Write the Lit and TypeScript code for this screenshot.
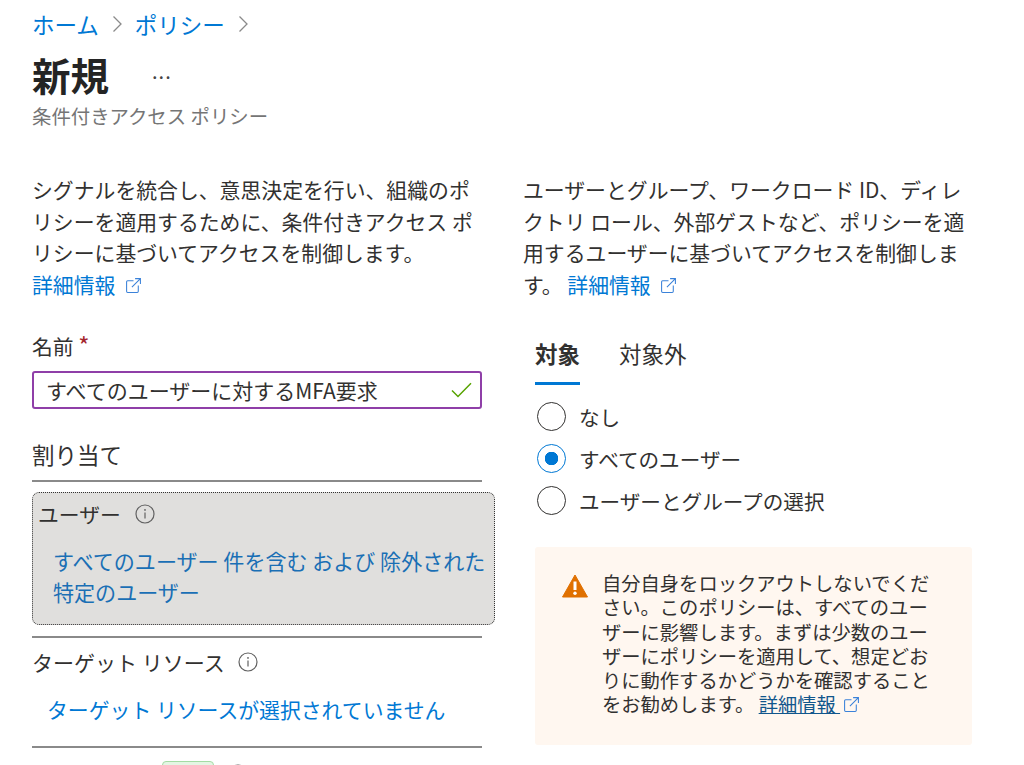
import { LitElement, html, css, svg } from 'lit'
import { customElement } from 'lit/decorators.js'

const externalIcon = html`<svg class="ext" viewBox="0 0 16 16" fill="none" stroke="currentColor" stroke-width="1">
  <path d="M8 3.5H2.5a1 1 0 0 0-1 1v9a1 1 0 0 0 1 1h9a1 1 0 0 0 1-1V8" />
  <path d="M6.5 9.5 14.5 1.5M9.5 1.5h5v5" />
</svg>`

const infoIcon = html`<svg class="info" viewBox="0 0 20 20" fill="none" stroke="#616161">
  <circle cx="10" cy="10" r="9" stroke-width="1.2" />
  <path d="M10 8.6v6" stroke-width="1.2" />
  <circle cx="10" cy="5.9" r=".9" fill="#616161" stroke="none" />
</svg>`

const chevron = svg`<path d="M1.5 1.5 9 9l-7.5 7.5" fill="none" stroke="#8a8a8a" stroke-width="1.3" />`

@customElement('app-root')
export class AppRoot extends LitElement {
  render () {
    return html`
      <div class="page">
        <nav class="crumbs">
          <a>ホーム</a><svg class="chev" viewBox="0 0 11 18">${chevron}</svg>
          <a>ポリシー</a><svg class="chev" viewBox="0 0 11 18">${chevron}</svg>
        </nav>
        <div class="title-row">
          <h1>新規</h1>
          <span class="more">...</span>
        </div>
        <div class="subtitle">条件付きアクセス ポリシー</div>

        <div class="columns">
          <section class="left">
            <p class="desc">シグナルを統合し、意思決定を行い、組織のポリシーを適用するために、条件付きアクセス ポリシーに基づいてアクセスを制御します。<br><a>詳細情報 ${externalIcon}</a></p>

            <label class="field-label">名前 <span class="req">*</span></label>
            <div class="input">
              <span>すべてのユーザーに対するMFA要求</span>
              <svg class="check" viewBox="0 0 21 16" fill="none" stroke="#57a300" stroke-width="1.5"><path d="M1 8.5 7 14.5 20 1.2" /></svg>
            </div>

            <div class="group-title">割り当て</div>
            <div class="rule"></div>

            <div class="selected">
              <div class="row-title">ユーザー ${infoIcon}</div>
              <a class="selected-link">すべてのユーザー 件を含む および 除外された 特定のユーザー</a>
            </div>
            <div class="rule second"></div>

            <div class="row-title plain">ターゲット リソース ${infoIcon}</div>
            <a class="target-link">ターゲット リソースが選択されていません</a>
            <div class="rule third"></div>

            <div class="row-title plain last">ネットワーク <span class="badge">NEW</span> ${infoIcon}</div>
          </section>

          <section class="right">
            <p class="desc">ユーザーとグループ、ワークロード ID、ディレクトリ ロール、外部ゲストなど、ポリシーを適用するユーザーに基づいてアクセスを制御します。 <a>詳細情報 ${externalIcon}</a></p>

            <div class="tabs">
              <div class="tab active">対象</div>
              <div class="tab">対象外</div>
            </div>

            <div class="radios">
              <div class="radio"><span class="dot"></span>なし</div>
              <div class="radio on"><span class="dot"></span>すべてのユーザー</div>
              <div class="radio"><span class="dot"></span>ユーザーとグループの選択</div>
            </div>

            <div class="warning">
              <svg class="warn-icon" viewBox="0 0 26 24">
                <path d="M13 1 25.5 23H.5Z" fill="#e07000" stroke="#e07000" stroke-width="1" stroke-linejoin="round" />
                <path d="M13 7.5v8.5" stroke="#fff" stroke-width="3" />
                <circle cx="13" cy="19.3" r="1.7" fill="#fff" />
              </svg>
              <p>自分自身をロックアウトしないでください。このポリシーは、すべてのユーザーに影響します。まずは少数のユーザーにポリシーを適用して、想定どおりに動作するかどうかを確認することをお勧めします。 <a><u>詳細情報 </u>${externalIcon}</a></p>
            </div>
          </section>
        </div>
      </div>
    `
  }

  static styles = css`
    :host {
      display: block;
      height: 765px;
      overflow: hidden;
      background: #fff;
      color: #323130;
      font-family: "Noto Sans CJK JP", "Liberation Sans", sans-serif;
    }

    a {
      color: #0078d4;
      text-decoration: none;
    }

    p {
      margin: 0;
    }

    .page {
      padding: 7px 0 0 32px;
    }

    .crumbs {
      display: flex;
      align-items: center;
      height: 34px;
      font-size: 22.5px;
      line-height: 34px;
    }

    .chev {
      width: 11px;
      height: 18px;
      margin: 0 12px 0 13px;
    }

    .title-row {
      display: flex;
      align-items: center;
      height: 48px;
      margin-top: 9px;
    }

    h1 {
      margin: 0;
      font-size: 38.5px;
      line-height: 48px;
      font-weight: 700;
      color: #242424;
    }

    .more {
      margin: 0 0 6px 43px;
      font-size: 20px;
      line-height: 20px;
      letter-spacing: 1px;
      color: #444;
    }

    .subtitle {
      margin-top: 4px;
      font-size: 19.4px;
      line-height: 28px;
      color: #757575;
    }

    .columns {
      display: flex;
      margin-top: 44px;
    }

    .left {
      width: 450px;
      flex: none;
    }

    .right {
      width: 450px;
      flex: none;
      margin-left: 41px;
    }

    .desc {
      font-size: 20.85px;
      line-height: 31.5px;
      height: 126px;
    }

    .ext {
      width: 17px;
      height: 17px;
      margin-left: 5px;
      vertical-align: -1px;
      color: #3b82d9;
    }

    .field-label {
      display: block;
      margin-top: 31px;
      font-size: 20.8px;
      line-height: 30px;
    }

    .req {
      color: #a4262c;
      font-size: 24px;
      line-height: 20px;
    }

    .input {
      display: flex;
      align-items: center;
      justify-content: space-between;
      box-sizing: border-box;
      height: 38px;
      margin-top: 10px;
      padding: 0 8px 0 12px;
      border: 2px solid #8f3fa8;
      border-radius: 3px;
      font-size: 21px;
    }

    .check {
      width: 21px;
      height: 16px;
    }

    .group-title {
      margin-top: 29px;
      font-size: 22.5px;
      line-height: 32px;
    }

    .rule {
      height: 2px;
      margin-top: 10px;
      background: #8a8a8a;
    }

    .selected {
      box-sizing: border-box;
      width: 463px;
      height: 133px;
      margin-top: 10px;
      padding: 4px 0 0 5px;
      background: #e0dfdd;
      border: 1.5px dotted #333;
      border-radius: 7px;
    }

    .row-title {
      display: flex;
      align-items: center;
      font-size: 20.8px;
      line-height: 34px;
    }

    .info {
      width: 20px;
      height: 20px;
      margin-left: 14px;
    }

    .selected-link {
      display: block;
      width: 440px;
      margin: 15px 0 0 15px;
      font-size: 21.05px;
      line-height: 31px;
      color: #1a6fb5;
    }

    .second {
      margin-top: 11px;
    }

    .plain {
      margin-top: 7px;
      font-size: 21px;
      line-height: 34px;
    }

    .plain .info {
      margin-left: 13px;
    }

    .target-link {
      display: block;
      margin: 15px 0 0 15px;
      font-size: 20.85px;
      line-height: 31px;
    }

    .third {
      margin-top: 21px;
    }

    .last {
      margin-top: 9px;
    }

    .badge {
      box-sizing: border-box;
      width: 52px;
      height: 26px;
      margin-left: 4px;
      border: 1px solid #a4dca4;
      border-radius: 4px;
      background: #e4f6e4;
      color: #107c10;
      font-size: 14px;
      line-height: 24px;
      text-align: center;
    }

    .plain .badge + .info {
      margin-left: 14px;
    }

    .tabs {
      display: flex;
      gap: 39px;
      margin: 32px 0 0 12px;
    }

    .tab {
      height: 53px;
      font-size: 22.5px;
      line-height: 42px;
      box-sizing: border-box;
    }

    .tab.active {
      font-weight: 700;
      border-bottom: 3px solid #0078d4;
    }

    .radios {
      display: flex;
      flex-direction: column;
      gap: 13px;
      margin: 17px 0 0 14px;
    }

    .radio {
      display: flex;
      align-items: center;
      gap: 13px;
      height: 29px;
      font-size: 20.6px;
    }

    .dot {
      box-sizing: border-box;
      flex: none;
      width: 29px;
      height: 29px;
      border: 1.5px solid #323130;
      border-radius: 50%;
    }

    .on .dot {
      border-color: #0078d4;
      background: radial-gradient(circle, #0078d4 0 6.5px, transparent 7px);
    }

    .warning {
      display: flex;
      box-sizing: border-box;
      width: 437px;
      height: 198px;
      margin: 32px 0 0 12px;
      padding: 24px 0 0 27px;
      background: #fff7f0;
      border-radius: 3px;
    }

    .warn-icon {
      flex: none;
      width: 26px;
      height: 24px;
      margin-top: 3px;
    }

    .warning p {
      width: 335px;
      margin-left: 14px;
      font-size: 19.3px;
      line-height: 24.3px;
    }

    .warning a {
      color: #11568c;
    }

    .warning .ext {
      margin-left: 3px;
      color: #3b82d9;
    }
  `
}
